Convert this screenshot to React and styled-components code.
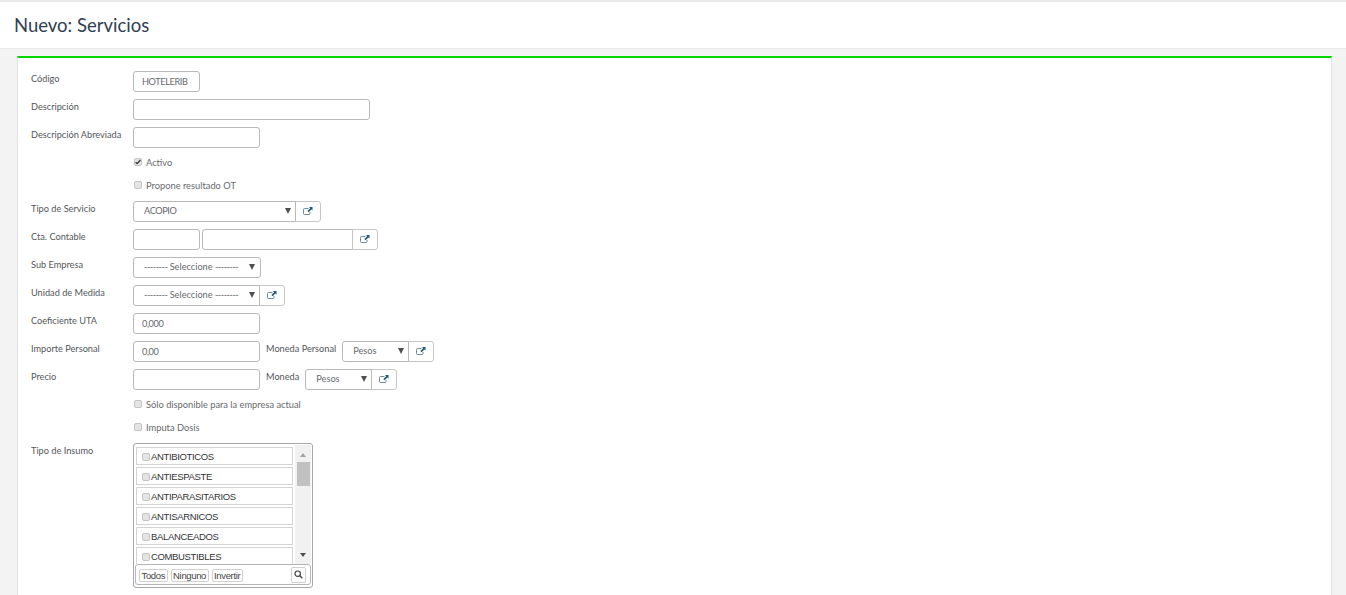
import React from "react";
import styled, { createGlobalStyle } from "styled-components";

const Global = createGlobalStyle`
  html, body { margin: 0; padding: 0; background: #f3f3f4; height: 595px; overflow: hidden; }
  body { font-family: Lato, "Liberation Sans", sans-serif; color: #676a6c; font-size: 9.2px; }
  * { box-sizing: border-box; }
`;

const TopStrip = styled.div`height: 2px; background: #e9e9ea;`;
const Header = styled.header`
  height: 47px;
  background: #fff;
  border-bottom: 1px solid #e7eaec;
  padding: 12px 0 0 14px;
`;
const Title = styled.h1`
  margin: 0;
  font-family: Lato, sans-serif;
  font-weight: 400;
  font-size: 18.5px;
  line-height: 23px;
  color: #2f4050;
`;
const Card = styled.main`
  margin: 7px 14px 0 17px;
  height: 600px;
  background: #fff;
  border-top: 2px solid #00d900;
  border-left: 1px solid #e0e0e0;
  border-right: 1px solid #e0e0e0;
  padding: 13px 0 0 13px;
`;
const Row = styled.div`
  display: flex;
  align-items: flex-start;
  height: 21px;
  margin-bottom: 7px;
`;
const CheckRow = styled.label`
  display: flex;
  align-items: center;
  height: 16px;
  padding-bottom: 2px;
  margin: 0 0 7px 103px;
  font-size: 9.3px;
  color: #676a6c;
`;
const Label = styled.label`
  width: 102px;
  flex: none;
  padding-top: 1px;
  font-size: 9.2px;
  line-height: 14px;
  white-space: nowrap;
  color: #54575a;
`;
const InlineLabel = styled(Label)`
  width: auto;
  margin: 0 6px 0 6px;
`;
const TextInput = styled.input`
  width: ${(p) => p.$w}px;
  height: 21px;
  margin-right: ${(p) => p.$mr || 0}px;
  border: 1px solid #b9b9b9;
  border-radius: 3px;
  padding: 0 8px 1px;
  font: 9.2px Lato, sans-serif;
  letter-spacing: -0.4px;
  color: #676a6c;
  background: #fff;
  outline: none;
`;
const LeftInput = styled(TextInput)`
  border-radius: 3px 0 0 3px;
`;
const SelectBox = styled.div`
  position: relative;
  width: ${(p) => p.$w}px;
  height: 21px;
  flex: none;
  border: 1px solid #b9b9b9;
  border-radius: ${(p) => (p.$alone ? "3px" : "3px 0 0 3px")};
  background: #fff;
  display: flex;
  align-items: center;
  padding: 0 0 2px ${(p) => p.$pad}px;
  font-size: 9.2px;
  letter-spacing: ${(p) => (p.$tight ? "-0.4px" : "0")};
  color: #676a6c;
  white-space: pre;
  &::after {
    content: "";
    position: absolute;
    right: ${(p) => p.$arrow}px;
    top: 6px;
    border-left: 3px solid transparent;
    border-right: 3px solid transparent;
    border-top: 6px solid #505050;
  }
`;
const Dashes = styled.span`
  letter-spacing: -0.5px;
`;
const LinkButton = styled.button`
  width: 26px;
  height: 21px;
  flex: none;
  margin-left: -1px;
  padding: 0 0 2px;
  border: 1px solid #c6c6c6;
  border-radius: 0 3px 3px 0;
  background: #fff;
  display: flex;
  align-items: center;
  justify-content: center;
`;
const Check = styled.span`
  width: 8px;
  height: 8px;
  flex: none;
  margin-right: ${(p) => p.$mr}px;
  margin-top: ${(p) => p.$mt || 0}px;
  border: 1px solid #c4c4c4;
  border-radius: 2px;
  background: #e4e4e4;
  display: flex;
  align-items: center;
  justify-content: center;
`;
const ListBox = styled.div`
  width: 180px;
  height: 145px;
  flex: none;
  border: 1px solid #a8a8a8;
  border-radius: 3px;
  background: #fff;
  padding: 1px;
  position: relative;
`;
const ListArea = styled.div`
  display: flex;
  height: 119px;
`;
const Items = styled.div`
  width: 160px;
  padding: 2px 0 0 1px;
  overflow: hidden;
`;
const Item = styled.div`
  width: 157px;
  height: 18px;
  margin-bottom: 2px;
  flex: none;
  border: 1px solid #d4d4d4;
  display: flex;
  align-items: center;
  padding: 1px 0 0 5px;
  font-family: "Liberation Sans", Arial, sans-serif;
  font-size: 9.5px;
  letter-spacing: -0.35px;
  color: #333;
`;
const Scrollbar = styled.div`
  width: 16px;
  margin-left: 1px;
  background: #f1f1f1;
  display: flex;
  flex-direction: column;
  align-items: center;
  height: 119px;
`;
const ArrowUp = styled.span`
  margin-top: 8px;
  border-left: 3.5px solid transparent;
  border-right: 3.5px solid transparent;
  border-bottom: 4px solid #a3a3a3;
`;
const Thumb = styled.span`
  width: 13px;
  height: 24px;
  margin: 5px 0 0 1px;
  background: #c1c1c1;
`;
const ArrowDown = styled.span`
  margin-top: 67px;
  border-left: 3.5px solid transparent;
  border-right: 3.5px solid transparent;
  border-top: 4px solid #505050;
`;
const ListFooter = styled.div`
  height: 21px;
  width: 176px;
  border: 1px solid #b5b5b5;
  border-radius: 3px;
  display: flex;
  align-items: center;
  padding: 0 4px 0 3px;
  gap: 3px;
`;
const MiniButton = styled.button`
  height: 13px;
  margin-top: 1px;
  padding: 0 1.5px;
  border: 1px solid #d0d0d0;
  border-radius: 2px;
  background: #fff;
  font-family: "Liberation Sans", Arial, sans-serif;
  font-size: 9.5px;
  letter-spacing: -0.35px;
  line-height: 11px;
  color: #444;
`;
const SearchButton = styled.button`
  width: 15px;
  height: 16px;
  margin-left: auto;
  padding: 0;
  border: 1px solid #cfcfcf;
  border-radius: 2px;
  background: #fff;
  display: flex;
  align-items: center;
  justify-content: center;
`;

const ExtIcon = () => (
  <svg width="10" height="8" viewBox="0 0 10 8" aria-hidden="true">
    <path d="M5.5 1.5H1.5Q0.5 1.5 0.5 2.5V6.5Q0.5 7.5 1.5 7.5H6Q7 7.5 7 6.5V5" fill="none" stroke="#5f7f92" strokeWidth="0.9" />
    <path d="M6 0H9.5V3.5L8.4 2.4L5.6 5.2L4.4 4L7.2 1.2Z" fill="#1f5a7a" />
  </svg>
);
const TickIcon = () => (
  <svg width="6" height="6" viewBox="0 0 6 6" aria-hidden="true">
    <path d="M0.6 3.2L2.2 4.6L5.4 1" fill="none" stroke="#3a3a3a" strokeWidth="1.4" />
  </svg>
);
const SearchIcon = () => (
  <svg width="9" height="9" viewBox="0 0 9 9" aria-hidden="true">
    <circle cx="3.7" cy="3.7" r="2.7" fill="none" stroke="#444" strokeWidth="1.2" />
    <path d="M5.8 5.8L8.3 8.3" stroke="#444" strokeWidth="1.5" />
  </svg>
);

const Link = () => (
  <LinkButton type="button" aria-label="Abrir"><ExtIcon /></LinkButton>
);
const Placeholder = () => (
  <>
    <Dashes>--------</Dashes> Seleccione <Dashes>--------</Dashes>
  </>
);
const insumos = ["ANTIBIOTICOS", "ANTIESPASTE", "ANTIPARASITARIOS", "ANTISARNICOS", "BALANCEADOS", "COMBUSTIBLES"];

export default function App() {
  return (
    <>
      <Global />
      <TopStrip />
      <Header><Title>Nuevo: Servicios</Title></Header>
      <Card>
        <Row><Label>Código</Label><TextInput $w={67} defaultValue="HOTELERIB" /></Row>
        <Row><Label>Descripción</Label><TextInput $w={237} /></Row>
        <Row><Label>Descripción Abreviada</Label><TextInput $w={127} /></Row>
        <CheckRow><Check $mr={4}><TickIcon /></Check>Activo</CheckRow>
        <CheckRow><Check $mr={4} />Propone resultado OT</CheckRow>
        <Row><Label>Tipo de Servicio</Label><SelectBox $tight $w={163} $pad={10} $arrow={4}>ACOPIO</SelectBox><Link /></Row>
        <Row><Label>Cta. Contable</Label><TextInput $w={67} $mr={2} /><LeftInput $w={151} /><Link /></Row>
        <Row><Label>Sub Empresa</Label><SelectBox $alone $w={128} $pad={10} $arrow={5}><Placeholder /></SelectBox></Row>
        <Row><Label>Unidad de Medida</Label><SelectBox $w={127} $pad={10} $arrow={4}><Placeholder /></SelectBox><Link /></Row>
        <Row><Label>Coeficiente UTA</Label><TextInput $w={127} defaultValue="0,000" /></Row>
        <Row><Label>Importe Personal</Label><TextInput $w={127} defaultValue="0,00" /><InlineLabel>Moneda Personal</InlineLabel><SelectBox $w={67} $pad={10} $arrow={4}>Pesos</SelectBox><Link /></Row>
        <Row><Label>Precio</Label><TextInput $w={127} /><InlineLabel>Moneda</InlineLabel><SelectBox $w={67} $pad={10} $arrow={4}>Pesos</SelectBox><Link /></Row>
        <CheckRow><Check $mr={4} />Sólo disponible para la empresa actual</CheckRow>
        <CheckRow><Check $mr={4} />Imputa Dosis</CheckRow>
        <Row>
          <Label>Tipo de Insumo</Label>
          <ListBox>
            <ListArea>
              <Items>
                {insumos.map((name) => (
                  <Item key={name}><Check $mr={1} $mt={1} />{name}</Item>
                ))}
              </Items>
              <Scrollbar><ArrowUp /><Thumb /><ArrowDown /></Scrollbar>
            </ListArea>
            <ListFooter>
              <MiniButton type="button">Todos</MiniButton>
              <MiniButton type="button">Ninguno</MiniButton>
              <MiniButton type="button">Invertir</MiniButton>
              <SearchButton type="button" aria-label="Buscar"><SearchIcon /></SearchButton>
            </ListFooter>
          </ListBox>
        </Row>
      </Card>
    </>
  );
}
